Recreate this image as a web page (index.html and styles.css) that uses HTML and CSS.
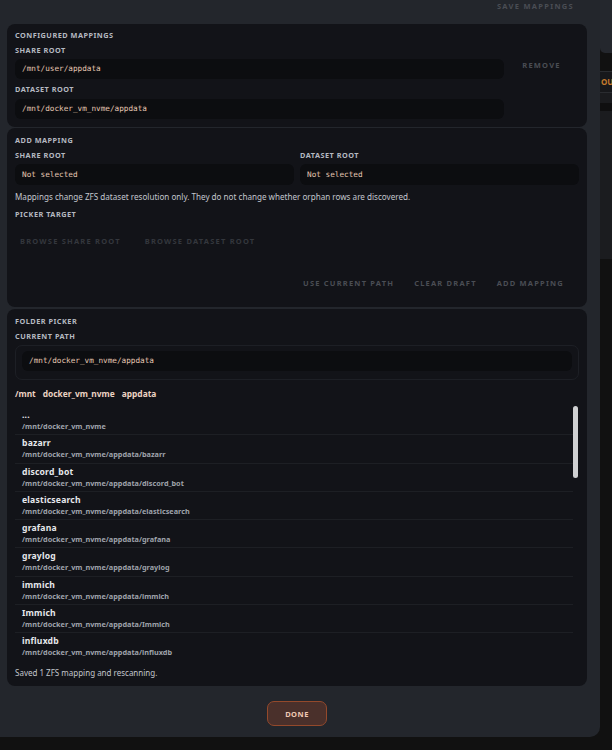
FILE: index.html
```html
<!DOCTYPE html>
<html lang="en">
<head>
    <meta charset="UTF-8">
    <meta name="viewport" content="width=device-width, initial-scale=1.0">
    <title>ZFS mappings</title>
    <link rel="stylesheet" href="styles.css">
</head>
<body>
    <div class="page">
        <div class="modal">
            <div class="modal-top">
                <button class="btn">Save mappings</button>
            </div>

            <!-- 已保存的映射 -->
            <section class="card card-configured">
                <h3 class="label">Configured mappings</h3>
                <div class="mapping">
                    <div class="mapping-fields">
                        <div class="label">Share root</div>
                        <div class="value">/mnt/user/appdata</div>
                        <div class="label">Dataset root</div>
                        <div class="value">/mnt/docker_vm_nvme/appdata</div>
                    </div>
                    <button class="btn remove">Remove</button>
                </div>
            </section>

            <!-- 新增映射 -->
            <section class="card card-add">
                <h3 class="label">Add mapping</h3>
                <div class="draft">
                    <div class="draft-col">
                        <div class="label">Share root</div>
                        <div class="value">Not selected</div>
                    </div>
                    <div class="draft-col">
                        <div class="label">Dataset root</div>
                        <div class="value">Not selected</div>
                    </div>
                </div>
                <p class="note">Mappings change ZFS dataset resolution only. They do not change whether orphan rows are discovered.</p>
                <div class="label">Picker target</div>
                <div class="browse-row">
                    <button class="btn btn-dim">Browse share root</button>
                    <button class="btn btn-dim">Browse dataset root</button>
                </div>
                <div class="action-row">
                    <button class="btn">Use current path</button>
                    <button class="btn">Clear draft</button>
                    <button class="btn">Add mapping</button>
                </div>
            </section>

            <!-- 文件夹选择 -->
            <section class="card card-picker">
                <h3 class="label">Folder picker</h3>
                <div class="label">Current path</div>
                <div class="path-box">
                    <div class="value">/mnt/docker_vm_nvme/appdata</div>
                </div>
                <div class="crumbs">
                    <span>/mnt</span>
                    <span>docker_vm_nvme</span>
                    <span>appdata</span>
                </div>
                <div class="list-wrap">
                    <ul class="folder-list">
                        <li><b>...</b><small>/mnt/docker_vm_nvme</small></li>
                        <li><b>bazarr</b><small>/mnt/docker_vm_nvme/appdata/bazarr</small></li>
                        <li><b>discord_bot</b><small>/mnt/docker_vm_nvme/appdata/discord_bot</small></li>
                        <li><b>elasticsearch</b><small>/mnt/docker_vm_nvme/appdata/elasticsearch</small></li>
                        <li><b>grafana</b><small>/mnt/docker_vm_nvme/appdata/grafana</small></li>
                        <li><b>graylog</b><small>/mnt/docker_vm_nvme/appdata/graylog</small></li>
                        <li><b>immich</b><small>/mnt/docker_vm_nvme/appdata/immich</small></li>
                        <li><b>Immich</b><small>/mnt/docker_vm_nvme/appdata/Immich</small></li>
                        <li><b>influxdb</b><small>/mnt/docker_vm_nvme/appdata/influxdb</small></li>
                    </ul>
                    <div class="scroll-thumb"></div>
                </div>
                <p class="status">Saved 1 ZFS mapping and rescanning.</p>
            </section>

            <div class="modal-footer">
                <button class="btn-done">Done</button>
            </div>
        </div>

        <!-- 遮罩后面的页面 -->
        <div class="backdrop">
            <div class="bd-block bd-head"></div>
            <div class="bd-gap"></div>
            <div class="bd-tab">OU</div>
            <div class="bd-line"></div>
            <div class="bd-dark"></div>
            <div class="bd-panel"></div>
        </div>
    </div>
</body>
</html>
```

FILE: styles.css
```css
*{
    margin: 0;
    padding: 0;
    box-sizing: border-box;
}
body{
    background-color: #111111;
    font-family: "Noto Sans", "Open Sans", sans-serif;
    overflow: hidden;
}
ul{
    list-style: none;
}
button{
    font-family: inherit;
    background: none;
    border: none;
}
.page{
    display: flex;
    width: 612px;
    height: 750px;
}
.modal{
    width: 600px;
    height: 737px;
    flex-shrink: 0;
    background-color: #23262c;
    border-radius: 0 0 10px 0;
    padding: 0 13px 0 7px;
    display: flex;
    flex-direction: column;
}
.modal > *{
    flex-shrink: 0;
}
.modal-top{
    height: 24px;
    display: flex;
    justify-content: flex-end;
    align-items: flex-start;
    padding-right: 3px;
}

/* 按钮 */
.btn{
    font-size: 7.5px;
    font-weight: 700;
    letter-spacing: 1.2px;
    text-transform: uppercase;
    color: #4a4d54;
    height: 12px;
    line-height: 12px;
    padding: 0 10px;
    white-space: nowrap;
}
.modal-top .btn{
    letter-spacing: 1.3px;
}
.btn-dim{
    color: #34373d;
    padding: 0 5px;
}

/* 卡片 */
.card{
    background-color: #121318;
    border-radius: 8px;
    padding: 6px 8px 8px;
}
.card + .card{
    margin-top: 1px;
}
.card-picker{
    margin-top: 2px !important;
}
.label{
    font-size: 7.3px;
    font-weight: 700;
    letter-spacing: .5px;
    text-transform: uppercase;
    color: #b5b9c1;
    line-height: 10px;
}
.value{
    font-family: "DejaVu Sans Mono", monospace;
    font-size: 7.7px;
    color: #e4c6b2;
    background-color: #0c0d10;
    border-radius: 6px;
    height: 20px;
    line-height: 20px;
    padding: 0 7px;
}

.card-configured .mapping{
    display: flex;
    margin-top: 5px;
}
.mapping-fields{
    width: 489px;
}
.mapping-fields .label{
    margin-bottom: 4px;
}
.mapping-fields .label + .value{
    margin-bottom: 5px;
}
.mapping-fields .value:last-child{
    margin-bottom: 0;
}
.mapping-fields .value + .label{
    margin-bottom: 5px;
}
.remove{
    flex: 1;
    margin-top: 14px;
    align-self: flex-start;
}

.card-add{
    padding-top: 7px;
    padding-bottom: 18px;
}
.draft{
    display: flex;
    gap: 6px;
    margin-top: 5px;
}
.draft-col{
    flex: 1;
}
.draft-col .value{
    margin-top: 4px;
    height: 21px;
    line-height: 21px;
}
.note{
    font-size: 8.1px;
    color: #c2c6cd;
    line-height: 12px;
    margin-top: 6px;
    margin-bottom: 6px;
}
.browse-row{
    display: flex;
    gap: 14px;
    margin-top: 16px;
}
.action-row{
    display: flex;
    justify-content: flex-end;
    margin-top: 30px;
    padding-right: 5px;
}

.card-picker{
    padding-top: 7px;
    padding-bottom: 7px;
}
.card-picker .label + .label{
    margin-top: 5px;
}
.path-box{
    margin-top: 4px;
    border: 1px solid #1d1f25;
    border-radius: 7px;
    padding: 5px 6px 8px;
}
.path-box .value{
    padding: 0 7px;
}
.crumbs{
    display: flex;
    gap: 7px;
    margin-top: 9px;
    font-size: 8.4px;
    font-weight: 700;
    line-height: 10px;
    color: #ecd2c2;
}
.list-wrap{
    position: relative;
    margin-top: 4px;
    height: 257px;
    overflow: hidden;
}
.folder-list{
    margin-right: 6px;
    padding-top: 4px;
}
.folder-list li{
    display: flex;
    flex-direction: column;
    padding: 3px 7px 3.3px;
    border-bottom: 1px solid #1d1f24;
}
.folder-list li:last-child{
    border-bottom: none;
}
.folder-list b{
    font-size: 8.6px;
    line-height: 11px;
    color: #e6e8ec;
    letter-spacing: .2px;
}
.folder-list small{
    font-size: 7.3px;
    font-weight: 700;
    line-height: 10px;
    color: #9ea2aa;
}
.scroll-thumb{
    position: absolute;
    top: 3px;
    right: 1px;
    width: 5px;
    height: 72px;
    border-radius: 3px;
    background-color: #cfd0d2;
}
.status{
    font-size: 8px;
    color: #c2c6cd;
    line-height: 12px;
    margin-top: 7px;
}

.modal-footer{
    display: flex;
    justify-content: center;
    padding-top: 15px;
}
.btn-done{
    width: 60px;
    height: 25px;
    border-radius: 7px;
    background-color: #4a302b;
    border: 1px solid #94492b;
    color: #efc8b4;
    font-size: 7.5px;
    font-weight: 700;
    letter-spacing: .5px;
    text-transform: uppercase;
}

/* 右侧背景 */
.backdrop{
    flex: 1;
    display: flex;
    flex-direction: column;
}
.bd-block{
    background-color: #24272d;
}
.bd-head{
    height: 53px;
    border-radius: 0 0 0 5px;
}
.bd-gap{
    height: 18px;
}
.bd-tab{
    height: 22px;
    border-top: 1px solid #2a2c30;
    border-bottom: 1px solid #2a2c30;
    background-color: #17181b;
    color: #c47a2c;
    font-size: 8px;
    font-weight: 700;
    line-height: 20px;
    padding-left: 1px;
}
.bd-line{
    height: 10px;
    background-color: #1a1b1e;
}
.bd-dark{
    height: 8px;
    background-color: #0f0f10;
}
.bd-panel{
    height: 148px;
    background-color: #1b1c1f;
}
```
